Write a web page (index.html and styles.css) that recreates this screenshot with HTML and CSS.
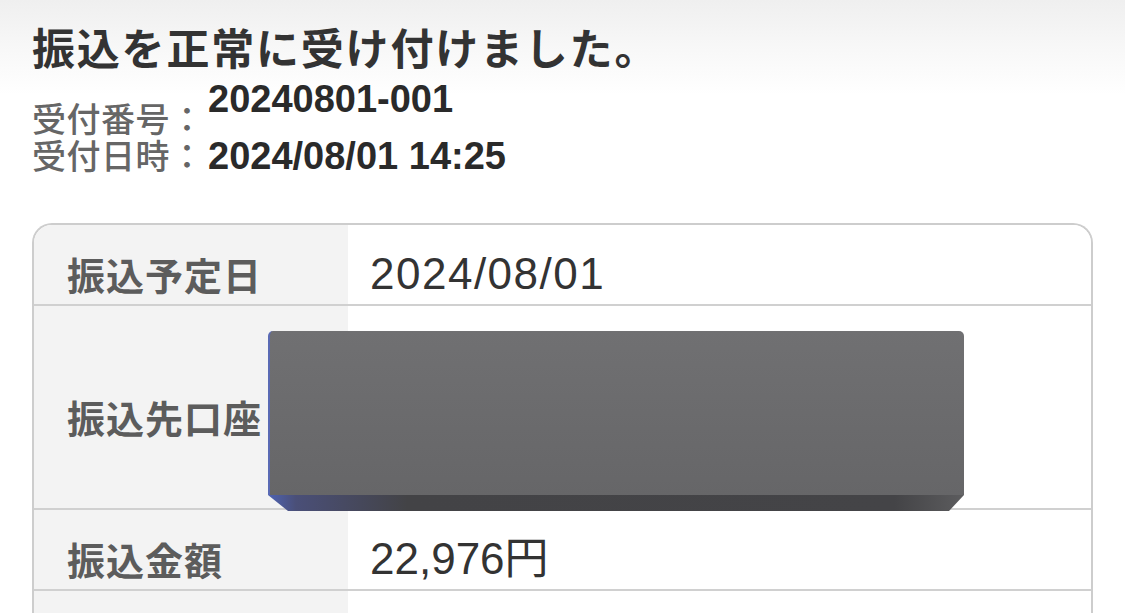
FILE: index.html
```html
<!DOCTYPE html>
<html lang="ja">
<head>
<meta charset="utf-8">
<title>振込受付完了</title>
<link rel="stylesheet" href="styles.css">
</head>
<body>
<main class="page">
  <h1 class="title">振込を正常に受け付けました。</h1>
  <div class="info">
    <div class="info-row info-row-first">
      <span class="info-label">受付番号：</span>
      <span class="info-value">20240801-001</span>
    </div>
    <div class="info-row">
      <span class="info-label">受付日時：</span>
      <span class="info-value">2024/08/01 14:25</span>
    </div>
  </div>

  <div class="detail">
    <div class="row">
      <div class="cell cell-label">振込予定日</div>
      <div class="cell cell-value value-date">2024/08/01</div>
    </div>
    <div class="row row-tall">
      <div class="cell cell-label">振込先口座</div>
      <div class="cell cell-value cell-account">
        <div class="redact">
          <div class="redact-face"></div>
          <div class="redact-edge"></div>
        </div>
      </div>
    </div>
    <div class="row">
      <div class="cell cell-label">振込金額</div>
      <div class="cell cell-value">22,976円</div>
    </div>
    <div class="row">
      <div class="cell cell-label"></div>
      <div class="cell cell-value"></div>
    </div>
  </div>
</main>
</body>
</html>
```

FILE: styles.css
```css
html, body {
  margin: 0;
  padding: 0;
}

body {
  background: linear-gradient(#efefef 0, #f8f8f8 50px, #ffffff 95px, #ffffff 100%);
  font-family: "Noto Sans CJK JP", "Noto Sans", sans-serif;
  color: #333333;
  overflow: hidden;
}

.page {
  padding: 21px 32px 0 32px;
}

.title {
  margin: 0;
  font-size: 43px;
  line-height: 50px;
  font-weight: 700;
  color: #333333;
  letter-spacing: 1.8px;
}

.info {
  margin-top: 9px;
  display: flex;
  flex-direction: column;
}

.info-row {
  display: flex;
  align-items: baseline;
}

.info-row-first {
  align-items: flex-start;
}

.info-row-first .info-label {
  margin-top: 19px;
}

.info-label {
  font-family: "Noto Sans CJK JP", sans-serif;
  font-weight: 500;
  font-size: 34px;
  line-height: 37px;
  letter-spacing: 0.5px;
  color: #666666;
  width: 176px;
  flex: none;
}

.info-value {
  font-family: "Liberation Sans", Arial, sans-serif;
  font-weight: 700;
  font-size: 38px;
  line-height: 38px;
  color: #2a2a2a;
}

.detail {
  margin-top: 48px;
  border: 2px solid #cdcdcd;
  border-bottom: none;
  border-radius: 20px 20px 0 0;
  background: #ffffff;
}

.row {
  display: grid;
  grid-template-columns: 314px 1fr;
  border-top: 2px solid #d0d0d0;
}

.row:first-child {
  border-top: none;
}

.row:first-child .cell-label {
  border-top-left-radius: 18px;
}

.row:first-child .cell-value {
  border-top-right-radius: 18px;
}

.cell {
  box-sizing: border-box;
  min-height: 79px;
  padding: 27px 0 8px 0;
  display: flex;
  align-items: center;
  line-height: 44px;
}

.cell-label {
  background: #f3f3f3;
  padding-left: 33px;
  font-family: "Noto Sans CJK JP", sans-serif;
  font-weight: 700;
  font-size: 38px;
  letter-spacing: 1px;
  color: #5c5c5c;
}

.cell-value {
  background: #ffffff;
  padding-left: 22px;
  font-family: "Liberation Sans", Arial, "Noto Sans CJK JP", sans-serif;
  font-size: 44px;
  color: #333333;
}

.value-date {
  letter-spacing: 1.5px;
}

.row-tall .cell {
  min-height: 202px;
}

.cell-account {
  position: relative;
}

.redact {
  position: absolute;
  left: -80px;
  top: 25px;
  width: 696px;
  height: 180px;
  display: flex;
  flex-direction: column;
}

.redact-face {
  flex: none;
  height: 164px;
  border-radius: 5px 5px 0 0;
  border-left: 2px solid #5a6ab4;
  box-sizing: border-box;
  background: linear-gradient(180deg, #707072 0, #6a6a6c 60%, #666668 100%);
}

.redact-edge {
  flex: none;
  height: 16px;
  clip-path: polygon(0 0, 100% 0, calc(100% - 15px) 100%, 20px 100%);
  background: linear-gradient(90deg, #4e63b2 0, #4a4f78 4%, #434346 20%, #444447 90%, #5c5c5e 100%);
}
```
